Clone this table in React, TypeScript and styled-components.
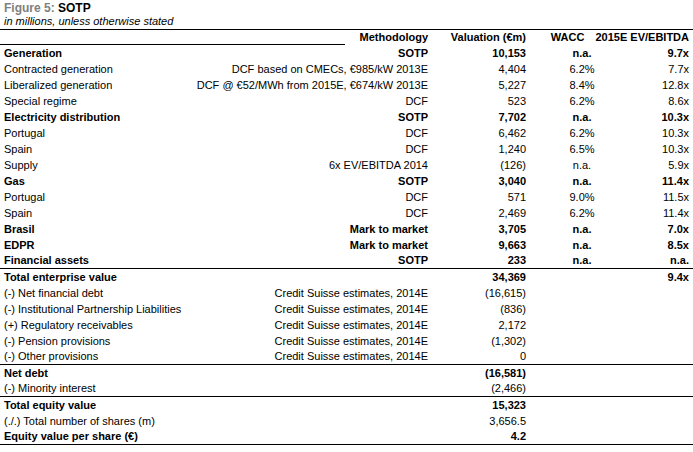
import React from 'react';
import styled, { createGlobalStyle } from 'styled-components';

const Global = createGlobalStyle`
  html, body { margin: 0; padding: 0; background: #fff; }
  body { font-family: "Liberation Sans", Arial, sans-serif; color: #000; }
`;

const Page = styled.div`
  width: 693px;
  height: 452px;
  overflow: hidden;
`;

const TitleBlock = styled.div`
  box-sizing: border-box;
  height: 30px;
  padding: 1px 4px 0;
  border-bottom: 1px solid #000;
`;

const Title = styled.div`
  font-size: 12px;
  font-weight: bold;
  line-height: 14px;
  color: #000;
`;

const FigNo = styled.span`
  color: #808080;
`;

const Subtitle = styled.div`
  font-size: 11px;
  font-style: italic;
  line-height: 13px;
`;

const Grid = styled.div<{ $line?: boolean; $h?: number }>`
  box-sizing: border-box;
  display: grid;
  grid-template-columns: 196px 228px 98px 112px 51px;
  padding: 0 4px;
  height: ${(p) => p.$h ?? 16}px;
  align-items: center;
  font-size: 11px;
  line-height: 13px;
  border-bottom: ${(p) => (p.$line ? '1px solid #000' : 'none')};
`;

const HeaderGrid = styled(Grid)`
  position: relative;
`;

const HeaderRule = styled.div`
  position: absolute;
  left: 0;
  bottom: 0;
  width: 345px;
  border-bottom: 1px solid #000;
`;

const Cell = styled.div<{ $align?: 'left' | 'right' | 'center'; $bold?: boolean; $span?: number }>`
  display: flex;
  white-space: nowrap;
  justify-content: ${(p) => (p.$align === 'right' ? 'flex-end' : p.$align === 'center' ? 'center' : 'flex-start')};
  font-weight: ${(p) => (p.$bold ? 'bold' : 'normal')};
  ${(p) => (p.$span ? `grid-column: span ${p.$span};` : '')}
  gap: 11px;
`;

type Row = {
  label: string;
  method?: string;
  val?: string;
  wacc?: string;
  ev?: string;
  bold?: boolean;
  line?: boolean;
};

const rows: Row[] = [
  { label: 'Generation', method: 'SOTP', val: '10,153', wacc: 'n.a.', ev: '9.7x', bold: true },
  { label: 'Contracted generation', method: 'DCF based on CMECs, €985/kW 2013E', val: '4,404', wacc: '6.2%', ev: '7.7x' },
  { label: 'Liberalized generation', method: 'DCF @ €52/MWh from 2015E, €674/kW 2013E', val: '5,227', wacc: '8.4%', ev: '12.8x' },
  { label: 'Special regime', method: 'DCF', val: '523', wacc: '6.2%', ev: '8.6x' },
  { label: 'Electricity distribution', method: 'SOTP', val: '7,702', wacc: 'n.a.', ev: '10.3x', bold: true },
  { label: 'Portugal', method: 'DCF', val: '6,462', wacc: '6.2%', ev: '10.3x' },
  { label: 'Spain', method: 'DCF', val: '1,240', wacc: '6.5%', ev: '10.3x' },
  { label: 'Supply', method: '6x EV/EBITDA 2014', val: '(126)', wacc: 'n.a.', ev: '5.9x' },
  { label: 'Gas', method: 'SOTP', val: '3,040', wacc: 'n.a.', ev: '11.4x', bold: true },
  { label: 'Portugal', method: 'DCF', val: '571', wacc: '9.0%', ev: '11.5x' },
  { label: 'Spain', method: 'DCF', val: '2,469', wacc: '6.2%', ev: '11.4x' },
  { label: 'Brasil', method: 'Mark to market', val: '3,705', wacc: 'n.a.', ev: '7.0x', bold: true },
  { label: 'EDPR', method: 'Mark to market', val: '9,663', wacc: 'n.a.', ev: '8.5x', bold: true },
  { label: 'Financial assets', method: 'SOTP', val: '233', wacc: 'n.a.', ev: 'n.a.', bold: true, line: true },
  { label: 'Total enterprise value', val: '34,369', ev: '9.4x', bold: true },
  { label: '(-) Net financial debt', method: 'Credit Suisse estimates, 2014E', val: '(16,615)' },
  { label: '(-) Institutional Partnership Liabilities', method: 'Credit Suisse estimates, 2014E', val: '(836)' },
  { label: '(+) Regulatory receivables', method: 'Credit Suisse estimates, 2014E', val: '2,172' },
  { label: '(-) Pension provisions', method: 'Credit Suisse estimates, 2014E', val: '(1,302)' },
  { label: '(-) Other provisions', method: 'Credit Suisse estimates, 2014E', val: '0', line: true },
  { label: 'Net debt', val: '(16,581)', bold: true },
  { label: '(-) Minority interest', val: '(2,466)', line: true },
  { label: 'Total equity value', val: '15,323', bold: true },
  { label: '(./.) Total number of shares (m)', val: '3,656.5' },
  { label: 'Equity value per share (€)', val: '4.2', bold: true, line: true },
];

export default function App() {
  return (
    <Page>
      <Global />
      <TitleBlock>
        <Title>
          <FigNo>Figure 5:</FigNo> SOTP
        </Title>
        <Subtitle>in millions, unless otherwise stated</Subtitle>
      </TitleBlock>
      <HeaderGrid $h={15}>
        <HeaderRule />
        <Cell $bold />
        <Cell $align="right" $bold>Methodology</Cell>
        <Cell $align="right" $bold>Valuation (€m)</Cell>
        <Cell $align="right" $bold $span={2}>
          <span>WACC</span>
          <span>2015E EV/EBITDA</span>
        </Cell>
      </HeaderGrid>
      {rows.map((r, i) => (
        <Grid key={i} $line={r.line}>
          <Cell $bold={r.bold}>{r.label}</Cell>
          <Cell $align="right" $bold={r.bold}>{r.method ?? ''}</Cell>
          <Cell $align="right" $bold={r.bold}>{r.val ?? ''}</Cell>
          <Cell $align="center" $bold={r.bold}>{r.wacc ?? ''}</Cell>
          <Cell $align="right" $bold={r.bold}>{r.ev ?? ''}</Cell>
        </Grid>
      ))}
    </Page>
  );
}
